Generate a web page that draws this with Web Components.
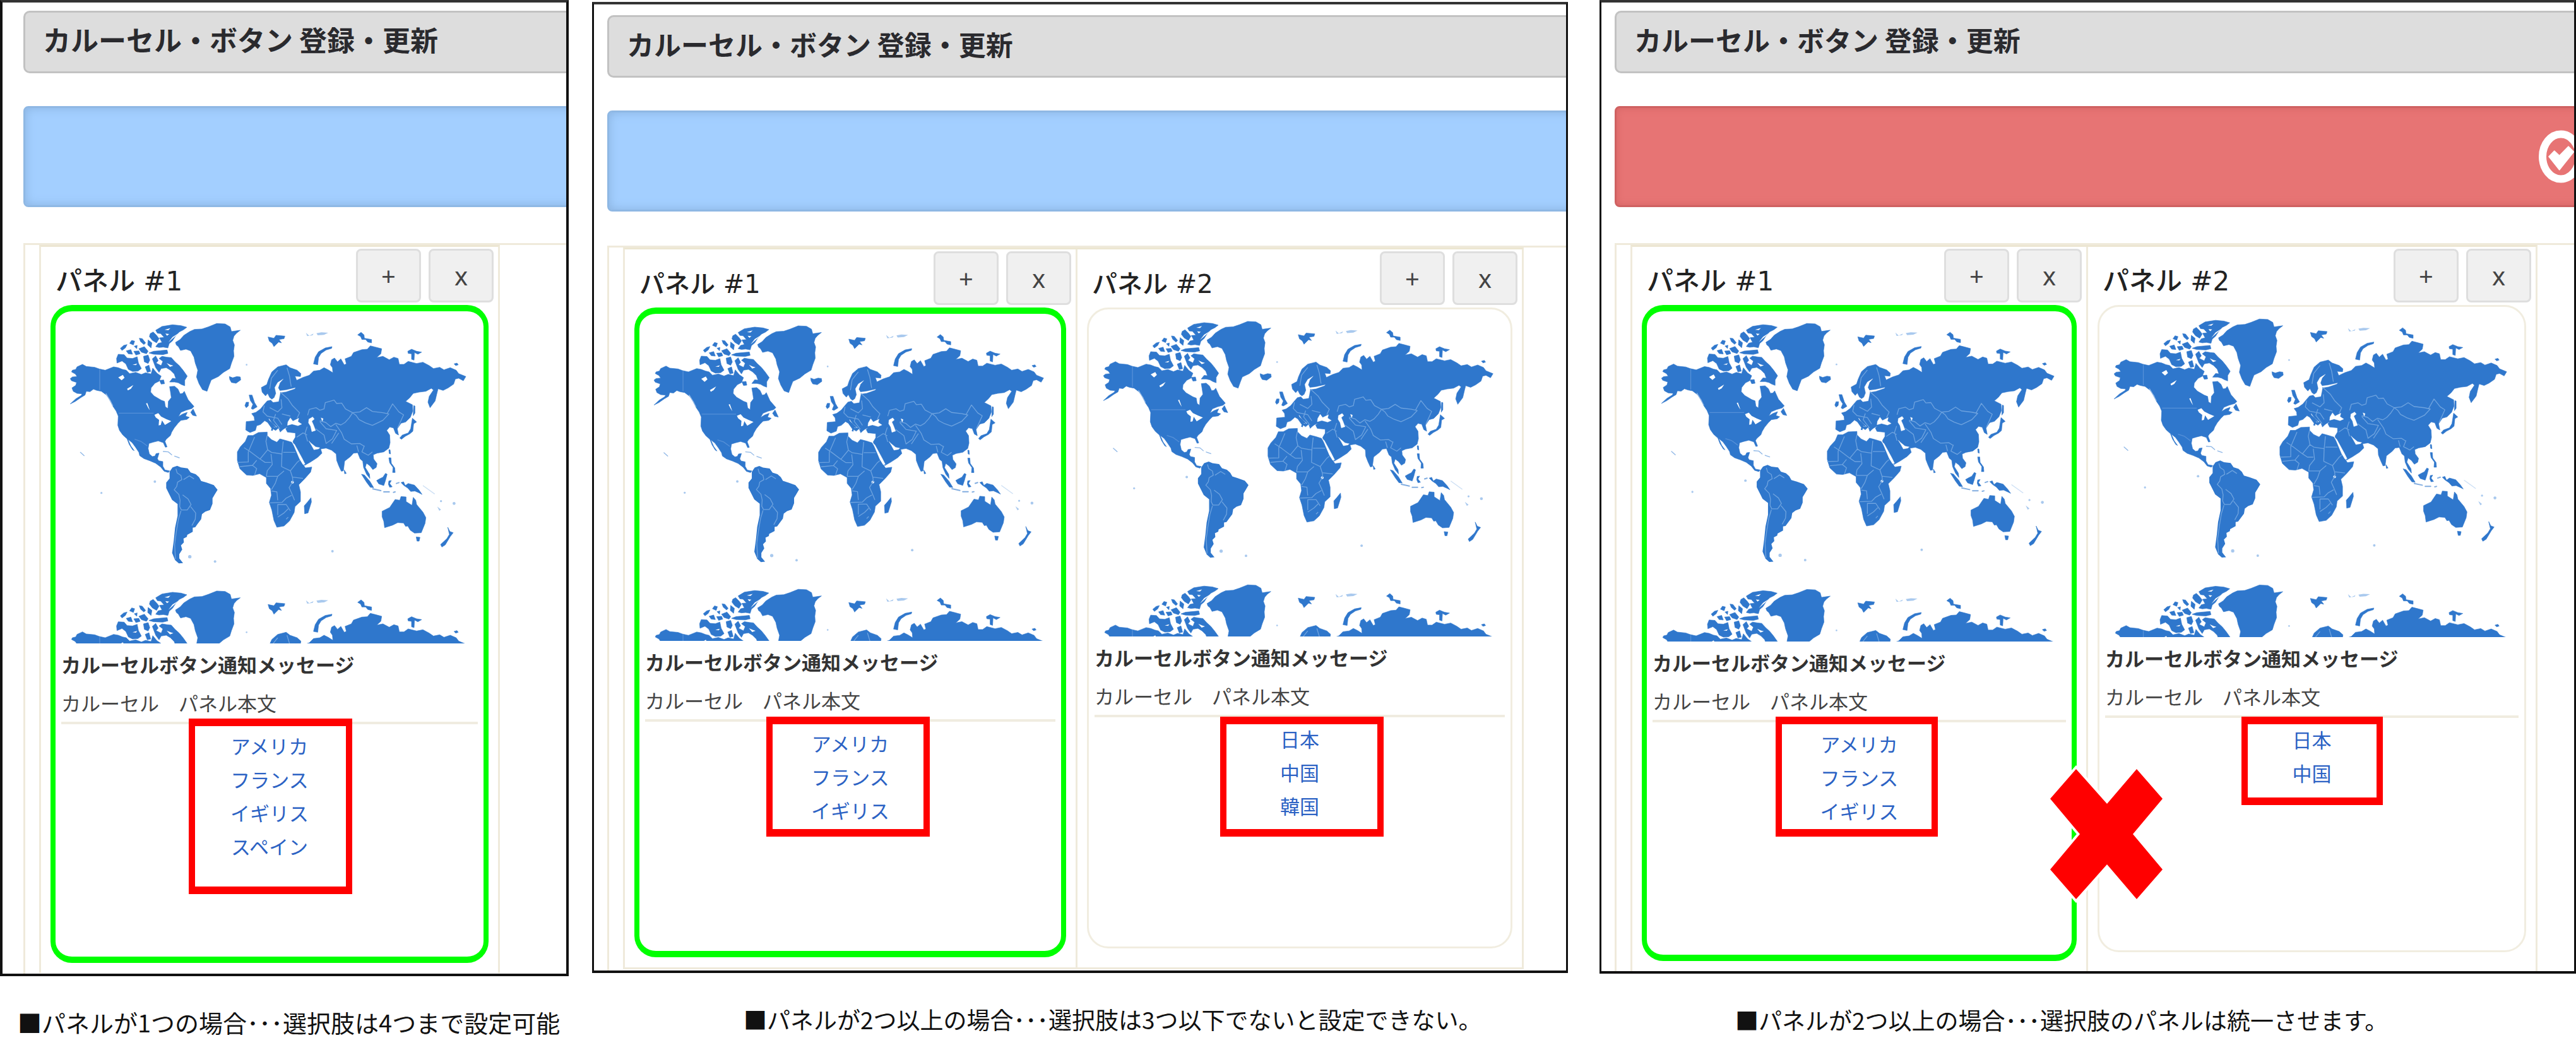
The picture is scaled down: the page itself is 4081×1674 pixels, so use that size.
<!DOCTYPE html>
<html lang="ja">
<head>
<meta charset="utf-8">
<title>カルーセル・ボタン 登録・更新</title>
<style>
body{margin:0;background:#fff;color:#222;font-family:"Noto Sans CJK JP","Noto Sans",sans-serif}
</style>
</head>
<body>
<carousel-guide>
  <screen-figure class="single" caption="■パネルが1つの場合･･･選択肢は4つまで設定可能">
    <carousel-panel heading="パネル #1" selected links="アメリカ,フランス,イギリス,スペイン" mark="211,645,259,278"></carousel-panel>
  </screen-figure>
  <screen-figure class="pair" caption="■パネルが2つ以上の場合･･･選択肢は3つ以下でないと設定できない。">
    <carousel-panel heading="パネル #1" selected links="アメリカ,フランス,イギリス" mark="201,638,259,190"></carousel-panel>
    <carousel-panel heading="パネル #2" links="日本,中国,韓国" mark="208,645,259,190"></carousel-panel>
  </screen-figure>
  <screen-figure class="error" caption="■パネルが2つ以上の場合･･･選択肢のパネルは統一させます。" alert>
    <carousel-panel heading="パネル #1" selected links="アメリカ,フランス,イギリス" mark="204,642,257,190"></carousel-panel>
    <carousel-panel heading="パネル #2" links="日本,中国" mark="225,649,224,140"></carousel-panel>
    <cross-mark slot="overlay"></cross-mark>
  </screen-figure>
</carousel-guide>

<script>
const attach = (el, html) => { el.attachShadow({mode:'open'}).innerHTML = html; };

customElements.define('carousel-guide', class extends HTMLElement{
  constructor(){
    super();
    attach(this, `<style>
      :host{display:grid;grid-template-columns:901fr 1546fr 1560fr;column-gap:37px;align-items:start}
      ::slotted(.single){--title:44px;--heading:42px;--caption:38px;--body:678px;--map:526px;--foot:496px;--gutter:33px;--edge:4px;--lead:13px;--rule:57px;--rest:1px;--indent:28px}
      ::slotted(.pair){--title:43px;--heading:40px;--caption:37px;--body:668px;--map:518px;--foot:491px;--gutter:21px;--edge:3px;--lead:17px;--rule:54px;--rest:2px;--base:3px;--indent:240px;margin-top:3px}
      ::slotted(.error){--title:43px;--heading:42px;--caption:37px;--body:673px;--map:523px;--foot:496px;--gutter:21px;--edge:3px;--lead:13px;--rule:57px;--rest:0px;--indent:215px;margin-left:13px}
    </style><slot></slot>`);
  }
});

customElements.define('screen-figure', class extends HTMLElement{
  constructor(){
    super();
    const alert = this.hasAttribute('alert');
    attach(this, `<style>
      :host{display:block;min-width:0}
      figure{margin:0;position:relative}
      .frame{box-sizing:border-box;overflow:hidden;border:var(--edge) solid #111;border-top:4px solid #333;border-bottom:4px solid #111;padding:var(--lead) 0 0 var(--gutter)}
      .page{width:2998px}
      h1{box-sizing:border-box;height:99px;margin:0 0 52px;padding:0 0 0 28px;border:3px solid #c2c2c2;border-radius:10px;background:#ddd;font-size:var(--title);line-height:84px;font-weight:700;color:#2a2a2e}
      .bar{box-sizing:border-box;height:160px;margin:0 0 var(--rule);border-radius:8px;display:flex;align-items:center;justify-content:center;
        background:#a3cfff;border:3px solid #8fb8e4;box-shadow:inset 0 0 16px #8ab2df}
      .bar.alert{background:#e77474;border-color:#cf6161;box-shadow:inset 0 0 12px #d46464}
      .bar svg{width:70px;height:84px}
      .deck{display:flex;width:max-content;min-width:100%;border:solid #efeadb;border-width:3px 0 0 3px;padding:0 0 var(--rest) 22px;box-sizing:border-box}
      .cells{display:flex;align-items:stretch;border:3px solid #efeadb;border-bottom-width:var(--base,0);border-top-color:#ece6d2}
      figcaption{margin:42px 0 0;padding-left:var(--indent);font-size:var(--caption);line-height:62px;color:#111;white-space:nowrap}
    </style>
    <figure>
      <div class="frame"><div class="page">
        <h1>カルーセル・ボタン 登録・更新</h1>
        <div class="bar${alert ? ' alert' : ''}">${alert ? `<svg viewBox="0 0 70 84" aria-hidden="true"><ellipse cx="35" cy="42" rx="29" ry="35.5" fill="none" stroke="#fff" stroke-width="12"/><path d="M16 42 24.7 33 32.7 40.5 47 26 55.5 34.5 32.7 63Z" fill="#fff" stroke="#fff" stroke-width="1.5" stroke-linejoin="round"/></svg>` : ''}</div>
        <div class="deck"><div class="cells"><slot></slot></div></div>
      </div></div>
      <slot name="overlay"></slot>
      <figcaption></figcaption>
    </figure>`);
    this.shadowRoot.querySelector('figcaption').textContent = this.getAttribute('caption');
  }
});

customElements.define('carousel-panel', class extends HTMLElement{
  constructor(){
    super();
    const [x,y,w,h] = this.getAttribute('mark').split(',');
    const links = this.getAttribute('links').split(',').map(t => `<li><a href="#">${t}</a></li>`).join('');
    attach(this, `<style>
      :host{display:block}
      :host(:not(:first-child)){border-left:3px solid #efeadb}
      header{display:flex;align-items:flex-end;justify-content:space-between;height:85px;padding:3px 7px 4px 23px}
      h2{margin:0;font-family:"DejaVu Sans","Noto Sans CJK JP",sans-serif;font-size:var(--heading);line-height:66px;font-weight:500;color:#222}
      .tools{display:flex;gap:12px}
      button{box-sizing:border-box;width:103px;height:85px;padding:0;border:3px solid #dedede;border-radius:8px;background:#f0f0f0;color:#444;font:40px/76px "Noto Sans",sans-serif}
      article{position:relative;width:var(--body);margin:0 15px 16px;border:3px solid #f1ede0;border-radius:34px;height:calc(var(--map) + var(--foot))}
      :host([selected]) article{border:10px solid #0f0;border-left-width:8px;border-right-width:8px}
      .in{padding:0 9px}
      world-map{height:var(--map)}
      p{margin:0;font-size:31px;line-height:61px;color:#444;white-space:pre}
      .msg{font-weight:700;color:#333;padding-top:2px}
      ul{list-style:none;margin:0;padding:7px 0 0;border-top:4px solid #f0ece0;text-align:center;font-size:31px;line-height:53px}
      a{color:#2b62c4;text-decoration:none}
      .mark{position:absolute;box-sizing:border-box;left:${x}px;top:${y}px;width:${w}px;height:${h}px;border:solid #f00;border-width:12px 10px;pointer-events:none}
    </style>
    <header><h2></h2><div class="tools"><button type="button" aria-label="パネルを追加">+</button><button type="button" aria-label="パネルを削除">x</button></div></header>
    <article><div class="in"><world-map></world-map>
      <p class="msg">カルーセルボタン通知メッセージ</p><p>カルーセル　パネル本文</p>
      <ul>${links}</ul></div><div class="mark"></div></article>`);
    this.shadowRoot.querySelector('h2').textContent = this.getAttribute('heading');
  }
});

customElements.define('cross-mark', class extends HTMLElement{
  constructor(){
    super();
    attach(this, `<style>:host{position:absolute;left:710px;top:1212px;width:186px;height:218px}svg{display:block;width:100%;height:100%}</style>
    <svg viewBox="0 0 186 218" aria-label="不可"><path d="M45 6 94 61 141 6 182 53 135 109 182 165 141 212 94 157 45 212 4 165 51 109 4 53Z" fill="#f00" stroke="#fff" stroke-width="8" paint-order="stroke"/></svg>`);
  }
});

customElements.define('world-map', class extends HTMLElement{
  constructor(){
    super();
    attach(this, `<style>:host{display:block}svg{display:block;width:100%;height:100%}</style>
    <svg viewBox="-9 -18 1980 1578" preserveAspectRatio="none" role="img" aria-label="世界地図">
    <defs><g id="world">
    <g fill="#2f77cc" stroke="#2f77cc" stroke-width="2" stroke-linejoin="round">
      <!-- North America -->
      <path d="M92 234 110 244 150 248 172 256 200 262 240 246 262 250 282 258 300 262 316 278 345 272 372 282 392 274 418 280 426 252 446 276 466 290 456 314 436 324 418 346 416 366 432 384 466 404 482 410 486 436 498 444 500 410 514 392 510 364 506 340 530 338 546 352 556 374 568 372 576 362 584 380 594 402 608 418 622 434 612 444 584 452 560 462 548 482 568 470 590 462 582 480 600 486 588 496 560 500 546 514 528 536 516 556 510 572 490 590 484 600 494 626 486 628 476 606 452 598 428 604 408 610 404 634 410 660 424 672 436 670 442 658 456 656 448 682 454 692 474 696 474 718 484 736 506 740 500 748 480 742 464 722 440 704 412 692 384 682 364 668 360 652 344 628 328 606 308 590 322 622 338 644 330 640 314 614 304 588 284 570 268 548 260 524 262 480 252 456 236 432 226 406 206 380 182 362 160 358 144 352 128 364 110 362 104 380 84 392 58 410 34 422 60 398 86 382 90 374 66 372 48 362 42 346 60 334 64 320 40 312 34 302 44 294 66 292 58 280 40 270 44 262 60 258 66 246Z"/>
      <!-- Arctic islands -->
      <path d="M262 186 290 188 304 204 330 206 352 198 358 228 372 254 356 266 330 268 310 258 298 232 280 218 256 228 254 206Z"/>
      <path d="M272 158 288 144 304 140 296 156 280 168ZM300 170 322 164 330 186 310 184ZM316 134 326 120 340 124 334 142ZM338 148 352 144 350 160ZM336 172 360 170 366 184 346 190ZM362 110 376 112 392 132 384 140 368 126ZM360 160 386 150 404 172 396 184 372 176ZM382 196 404 190 412 214 404 230 386 222ZM390 246 408 238 416 268 400 272ZM404 118 422 132 418 156 402 142ZM408 180 430 172 494 166 498 182 474 188 430 186ZM414 88 428 80 444 96 456 112 444 132 424 120 410 102ZM440 72 470 54 520 46 560 50 588 58 572 70 552 80 534 100 520 122 504 136 498 156 476 152 456 154 440 150 452 134 470 130 458 108 480 106 464 88 448 86Z"/>
      <path d="M424 208 440 194 452 216 442 228 466 240 474 220 456 206 470 196 494 200 514 202 532 222 552 240 570 262 590 290 578 310 578 336 562 330 548 322 530 318 506 318 520 300 536 302 528 280 510 262 490 250 466 254 456 272 440 250Z"/>
      <path d="M458 310 478 308 482 326 466 328ZM606 462 618 446 634 480 616 476Z"/>
      <!-- Greenland -->
      <path d="M534 130 556 116 574 96 602 78 624 68 660 66 690 56 730 40 770 42 794 56 800 78 842 72 824 86 812 100 806 120 814 142 810 170 812 196 800 228 792 254 762 272 738 292 704 308 694 334 684 362 662 354 646 326 634 294 640 262 628 228 622 200 606 170 584 162 558 168 548 150 538 142Z"/>
      <path d="M790 292 806 298 826 292 842 294 844 308 822 324 800 320 792 306Z"/>
    </g>
    <g fill="none" stroke="#8fb7e6" stroke-width="4" stroke-linecap="round"><path d="M476 648 500 650 516 664M530 670 552 678M82 652 100 668M204 374 222 404 236 430"/></g>
    <g fill="none" stroke="#5590d8" stroke-width="4"><path d="M174 258V356M264 466H430M340 590 370 600 400 622"/></g>
    <g fill="#fff"><path d="M262 296 284 284 292 298 278 310ZM304 350 334 332 322 350 308 358ZM394 420 400 418 412 452 404 440ZM434 474 452 466 466 482 490 494 514 504 484 522 470 500 464 522 454 524 456 498 440 486ZM552 84 520 104 500 130 520 112ZM330 236 352 230 346 238ZM482 70 510 62 500 72ZM486 88 504 90 494 98ZM492 228 510 236 524 240 508 246Z"/></g>
    <!-- South America -->
    <g transform="translate(0 690)">
      <path fill="#2f77cc" d="M506 54 520 34 542 26 560 34 592 38 606 58 630 66 646 80 656 98 682 106 716 118 734 140 722 160 710 180 710 206 698 236 676 244 660 256 656 280 638 304 628 318 616 320 616 340 590 354 588 364 572 372 574 390 560 404 566 424 552 446 552 466 570 488 550 490 532 474 518 440 526 380 532 320 544 264 544 208 518 188 506 164 490 132 490 106 506 86Z"/>
      <path fill="none" stroke="#6ea3df" stroke-width="4" stroke-linejoin="round" d="M536 40 542 60 560 72 564 92 544 104 540 124 528 140 550 162 556 190 554 220 562 236 590 236 608 210 594 184 568 164M572 92 600 74 622 88M560 240 548 280 538 340 530 400 534 470M606 220 630 250 628 280 612 310"/>
      <g fill="#a9c9ee"><circle cx="602" cy="458" r="8"/><circle cx="722" cy="481" r="6"/><circle cx="436" cy="101" r="6"/><circle cx="182" cy="155" r="5"/></g>
    </g>
    <!-- Eurasia, Africa, Oceania -->
    <g transform="translate(720 0)">
      <g fill="#2f77cc" stroke="#2f77cc" stroke-width="2" stroke-linejoin="round">
      <path d="M272 270 300 246 340 236 358 250 392 262 410 278 408 292 382 290 390 310 420 296 450 286 470 266 500 262 520 250 540 260 562 274 560 250 550 236 556 212 570 204 584 222 600 208 616 236 626 232 620 208 650 196 660 178 700 164 726 162 740 146 764 152 794 160 790 184 770 202 800 196 830 212 852 200 872 206 878 234 900 234 920 220 960 230 990 224 1020 240 1040 254 1070 248 1090 260 1120 250 1148 262 1160 278 1194 292 1182 312 1160 300 1144 304 1136 328 1110 346 1086 358 1062 350 1056 374 1048 408 1024 440 1014 414 1020 386 1040 356 1030 348 1004 362 972 366 944 372 928 392 908 410 940 426 942 456 930 486 908 508 886 514 868 540 874 570 860 562 850 536 832 532 818 548 832 570 834 606 828 632 804 650 772 656 754 664 756 684 772 706 768 724 752 734 738 716 722 704 716 724 736 756 738 776 722 756 708 724 704 694 692 684 680 654 660 656 646 672 618 694 612 740 602 742 590 716 580 690 578 660 556 642 530 632 504 636 510 656 490 676 456 698 428 714 414 692 392 654 376 620 366 604 340 596 310 588 296 604 270 592 250 572 250 556 208 558 182 572 158 572 146 600 122 626 108 650 108 690 120 730 152 760 182 762 214 754 246 772 246 800 266 824 270 856 260 890 272 926 282 976 296 1008 330 1002 356 978 378 938 382 910 408 886 408 840 400 806 428 778 456 746 462 722 432 726 412 708 428 722 404 680 384 640 372 600 384 580 384 560 346 556 338 540 348 530 330 540 322 546 312 556 304 536 290 548 270 536 252 510 238 502 218 520 200 526 194 548 168 558 148 546 150 506 190 502 188 484 176 468 196 462 218 446 236 424 250 408 276 402 262 392 252 372 242 384 226 366 222 344 248 330 256 306Z"/>
      <path d="M254 104 282 110 292 96 334 100 330 112 306 116 318 132 304 128 282 150 274 134 260 124ZM470 232 478 200 494 174 526 156 558 150 556 158 530 166 506 182 494 202 490 236ZM680 94 696 82 710 94 712 110 746 116 746 132 728 128 718 116 700 116 694 102ZM918 172 936 162 960 172 984 176 966 186 950 178 948 214 936 210 936 184 920 182ZM1138 232 1152 228 1158 236 1146 240ZM164 380 178 380 190 416 202 436 182 448 174 444 182 424 170 406ZM144 430 150 414 162 414 160 432 150 440ZM940 490 960 508 946 516 942 552 928 564 906 576 888 590 880 584 892 570 920 560 932 540ZM946 430 952 432 952 466 944 478ZM698 756 712 760 738 790 756 820 740 818 722 794ZM770 786 784 778 800 770 812 752 820 756 812 786 804 810 780 802ZM886 796 898 792 906 810 920 800 950 808 972 832 986 852 970 844 952 836 932 838 918 822 900 810ZM426 906 440 890 458 868 460 888 444 940 428 944ZM616 736 626 752 618 754ZM828 640 834 640 836 660 830 658ZM828 678 838 678 840 704 856 726 858 748 846 748 848 724 832 702ZM828 788 840 786 832 800 844 816 832 818 826 804ZM796 932 832 914 858 876 880 880 886 862 910 864 910 886 938 904 944 866 956 880 960 900 990 936 1004 962 1000 990 982 1034 950 1036 930 1022 918 1002 908 1004 898 988 870 986 846 998 808 1010 804 980 796 958ZM958 1054 976 1056 972 1074 962 1074ZM1108 1008 1118 1028 1134 1034 1120 1052 1096 1092 1080 1102 1074 1090 1104 1062 1116 1042Z"/>
      </g>
      <g fill="none" stroke="#2f77cc" stroke-width="6" stroke-linecap="round" opacity=".6"><path d="M752 826 790 834M804 840 830 840M850 842 858 840M864 800 876 796"/></g>
      <g fill="#fff" stroke="#fff" stroke-linejoin="round">
        <path d="M326 304 310 322 302 346 310 360 340 356 384 346 380 350 340 364 312 368 308 390 304 410 278 414 268 404 284 392 292 372 286 344 300 320Z"/>
        <path d="M348 508 360 488 372 504 400 490 396 506 414 518 396 526 368 518 346 524ZM448 494 466 484 474 494 462 504 470 522 480 548 462 554 456 528 446 512ZM506 488 516 492 512 506ZM448 598 458 608 480 626 500 630 494 636 472 640 460 618ZM372 608 380 614 416 680 430 708 420 710 404 684Z"/>
        <path d="M258 492 272 512 296 532 282 532 262 508Z"/>
        <circle cx="370" cy="794" r="6"/>
      </g>
      <path fill="#2f77cc" d="M242 484 256 496 288 526 294 534 280 530 276 550 268 548 272 534 246 502Z"/>
      <g fill="none" stroke="#6ea3df" stroke-width="4" stroke-linejoin="round">
        <path d="M442 476 450 448 482 440 500 452 520 446 526 416 568 404 580 420 604 418 622 446 656 464 640 488 620 510 600 522 576 514 552 530 528 510 500 502M656 464 690 460 722 440 750 458 800 464 828 470 800 500 750 524 716 512 686 496 672 476ZM820 468 846 422 876 460 898 474 870 536M576 520 604 560 616 590 650 612 690 610 712 624M500 506 530 540 580 548 560 588 530 610 520 570 480 540M590 560 556 610M440 530 430 560 442 600M390 580 420 560 440 570M712 620 700 650 730 666 750 650M676 620 684 650"/>
        <path d="M344 250 356 290 364 340M300 262 270 300 262 350M312 366 350 400 370 430 404 464 392 490M236 430 230 460 250 480 300 490 320 520M262 440 300 460 320 440 316 400M320 470 360 480M290 470 280 500 310 540"/>
        <path d="M250 572 244 600 252 640 216 684 168 648 140 630M252 640 270 652 320 660 326 600M326 652 384 652M320 660 318 720 360 740 370 770 420 776M268 660 274 710 250 740 246 766M108 700 160 698 160 650 190 580M120 720 180 714 200 690M180 714 200 730 190 760M216 684 240 700 268 700M246 766 300 766 330 740M360 740 392 700 404 690M300 766 288 800 270 830M370 770 372 790 354 820 366 846 380 880M300 880 296 840 270 836M262 892 320 890 340 870 366 856M300 950 300 900 340 900 360 930M300 960 330 940 350 920M340 970 350 960"/>
        <path d="M990 810 1046 850" stroke-opacity=".35"/>
      </g>
      <g fill="#a9c9ee"><circle cx="560" cy="1122" r="6"/><circle cx="1138" cy="895" r="7"/><circle cx="1076" cy="884" r="5"/><circle cx="152" cy="236" r="4"/><path d="M1058 910 1076 924 1068 930ZM434 84 450 98 470 88 466 96 440 100ZM484 86 508 82 540 84 520 94 490 96Z"/></g>
    </g>
    </g></defs>
    <use href="#world"/><use href="#world" y="1271"/>
    </svg>`);
  }
});
</script>
</body>
</html>
